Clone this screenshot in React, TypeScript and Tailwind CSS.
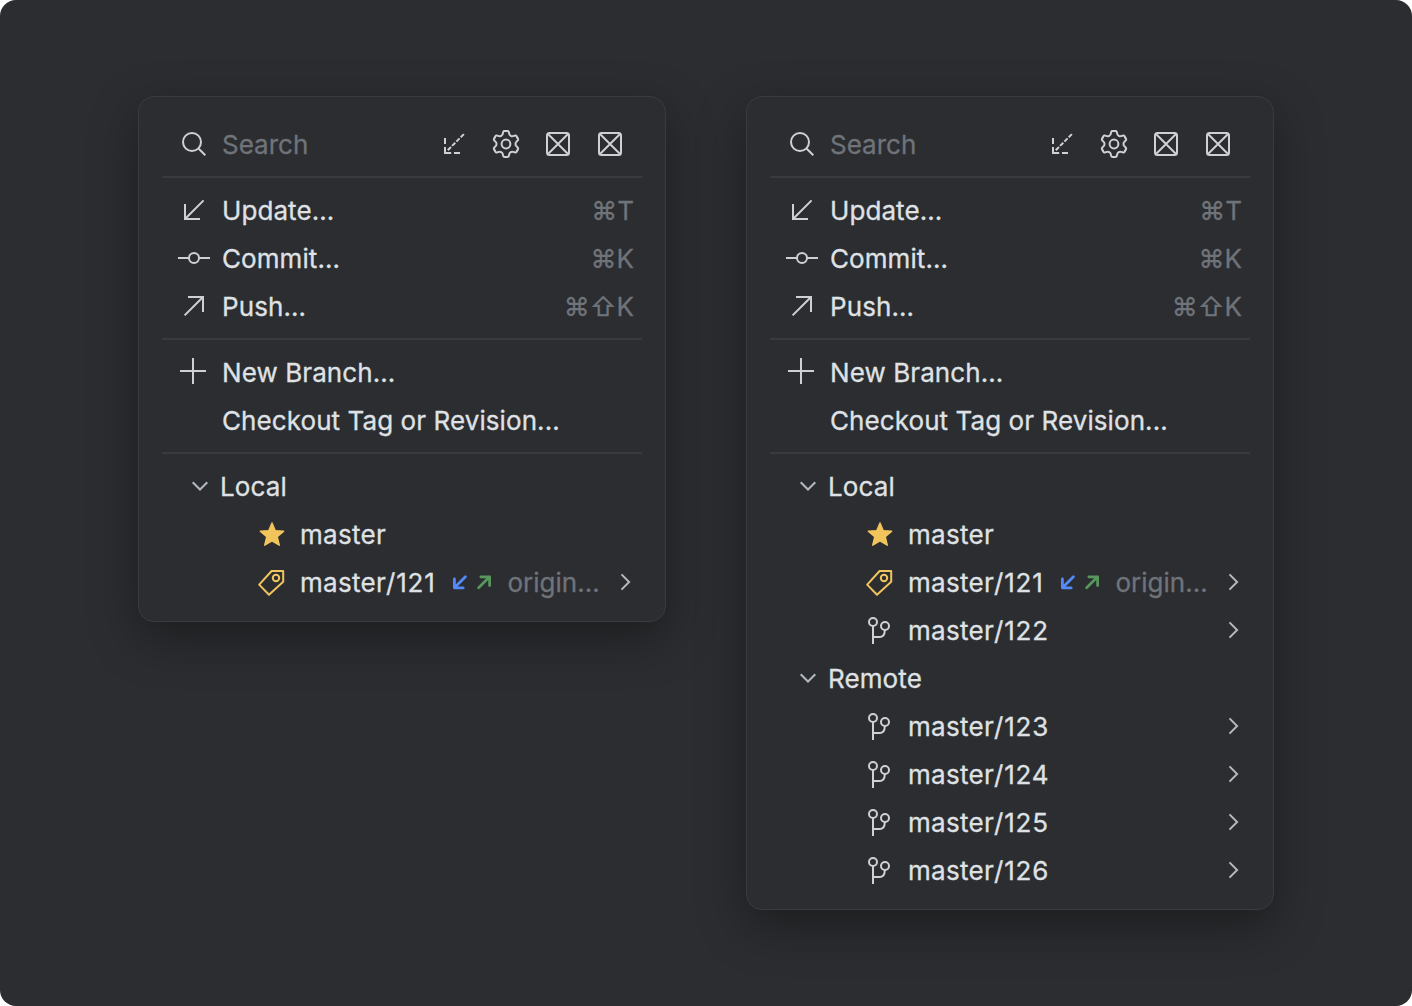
import type { ReactNode } from "react";

type IconProps = { children: ReactNode; className?: string };

function Icon({ children, className = "text-[#ced0d6]" }: IconProps) {
  return (
    <svg
      className={`size-8 shrink-0 ${className}`}
      viewBox="0 0 32 32"
      fill="none"
      stroke="currentColor"
      strokeWidth="2"
    >
      {children}
    </svg>
  );
}

const SearchIcon = () => (
  <Icon>
    <circle cx="14" cy="14" r="9" />
    <path d="M20.5 20.5L27.3 27.3" />
  </Icon>
);

const FetchIcon = () => (
  <Icon>
    <path d="M7 10V16M7 19V25H13.2M16 25H22" />
    <path d="M25.9 6.1L9.3 22.7" strokeDasharray="4.5 1.6" />
  </Icon>
);

// One sixth of the gear outline, from the middle of a tooth to the middle of the next.
const gearTooth =
  "M0 -13L1.6 -13Q2.4 -13 2.7 -12.2L3.3 -10C3.7 -8.5 5.51 -7.45 7.01 -7.86L9.22 -8.44Q10.06 -8.58 10.46 -7.89L11.26 -6.5";

const GearIcon = () => (
  <Icon>
    <g transform="translate(16 16)" strokeLinecap="round">
      {[0, 60, 120, 180, 240, 300].map((angle) => (
        <path key={angle} d={gearTooth} transform={`rotate(${angle})`} />
      ))}
      <circle r="4.4" />
    </g>
  </Icon>
);

const PlaceholderIcon = () => (
  <Icon>
    <rect x="5" y="5" width="22" height="22" rx="2.5" />
    <path d="M6 6L26 26M26 6L6 26" />
  </Icon>
);

const UpdateIcon = () => (
  <Icon>
    <path d="M7 10V25H22M7 25L25.6 6.4" />
  </Icon>
);

const CommitIcon = () => (
  <Icon>
    <circle cx="16" cy="16" r="5" />
    <path d="M0 16H11M21 16H32" />
  </Icon>
);

const PushIcon = () => (
  <Icon>
    <path d="M10 7H25V22M25 7L6.6 25.4" />
  </Icon>
);

const PlusIcon = () => (
  <Icon>
    <path d="M2 15H28M15 2V28" />
  </Icon>
);

const ChevronDown = () => (
  <Icon className="text-[#b4b8bf]">
    <path d="M8.7 12.2L16 19.5L23.3 12.2" />
  </Icon>
);

const ChevronRight = () => (
  <Icon className="text-[#b4b8bf]">
    <path d="M11.5 8.4L19.1 16L11.5 23.6" />
  </Icon>
);

const StarIcon = () => (
  <Icon className="text-[#f2c55c]">
    <path
      d="M16 5L19.2 12.6L27.7 13.3L21.3 18.8L23.3 27.2L16 22.8L8.7 27.2L10.7 18.8L4.3 13.3L12.8 12.6Z"
      fill="currentColor"
      strokeWidth="1.4"
      strokeLinejoin="round"
    />
  </Icon>
);

const TagIcon = () => (
  <Icon className="text-[#f2c55c]">
    <path d="M15.6 5H27.2V15.8L13 28.7L3.2 18.6Z" strokeLinejoin="round" />
    <circle cx="20" cy="12" r="3.2" />
  </Icon>
);

const BranchIcon = () => (
  <Icon>
    <circle cx="9" cy="8" r="4" />
    <circle cx="21" cy="12" r="4" />
    <path d="M9 12V30M20.8 16C20.8 20.5 19.5 23 15.5 23H9" />
  </Icon>
);

const IncomingIcon = () => (
  <svg className="size-6 shrink-0 text-[#548af7]" viewBox="0 0 24 24" fill="none" stroke="currentColor" strokeWidth="2.8" strokeLinecap="round" strokeLinejoin="round">
    <path d="M6.4 9V17.8H15.2M6.4 17.8L17.4 6.8" />
  </svg>
);

const OutgoingIcon = () => (
  <svg className="size-6 shrink-0 text-[#57965c]" viewBox="0 0 24 24" fill="none" stroke="currentColor" strokeWidth="2.8" strokeLinecap="round" strokeLinejoin="round">
    <path d="M8.8 6.8H17.6V15.6M17.6 6.8L6.6 17.8" />
  </svg>
);

const Separator = () => <div className="mx-[23px] my-2 h-0.5 bg-[#393b40]" />;

function Action({ icon, label, keys }: { icon?: ReactNode; label: string; keys?: string }) {
  return (
    <div className="flex h-12 items-center gap-3 pr-[31px] pl-[39px]">
      {icon ?? <span className="size-8" />}
      <span className="pt-0.5 tracking-[0.08px]">{label}</span>
      {keys && <span className="ml-auto pt-0.5 text-[#6f737a]">{keys}</span>}
    </div>
  );
}

function Group({ label }: { label: string }) {
  return (
    <div className="flex h-12 items-center gap-1 pl-[45px]">
      <ChevronDown />
      <span className="pt-0.5 tracking-[0.1px]">{label}</span>
    </div>
  );
}

type BranchProps = { icon: ReactNode; name?: string; id?: string; tracking?: string };

function Branch({ icon, name = "master", id, tracking }: BranchProps) {
  return (
    <div className="flex h-12 items-center gap-3 pr-[23px] pl-[117px]">
      {icon}
      <span className="pt-0.5 tracking-[0.3px]">
        {name}
        {id && <span className="tracking-[0.75px]">/{id}</span>}
      </span>
      {tracking && (
        <>
          <span className="flex">
            <IncomingIcon />
            <OutgoingIcon />
          </span>
          <span className="-mr-3 pt-0.5 text-[#6f737a]">{tracking}</span>
        </>
      )}
      {id && (
        <span className="ml-auto">
          <ChevronRight />
        </span>
      )}
    </div>
  );
}

function Popup({ children }: { children?: ReactNode }) {
  return (
    <section className="w-[528px] rounded-2xl border border-[#393b40] bg-[#2b2d30] pt-[23px] pb-[15px] shadow-[0_16px_48px_rgba(0,0,0,0.35)]">
      <div className="flex h-12 items-center gap-3 pr-[39px] pl-[39px]">
        <SearchIcon />
        <span className="pt-0.5 text-[#6f737a]">Search</span>
        <div className="ml-auto flex gap-5">
          <FetchIcon />
          <GearIcon />
          <PlaceholderIcon />
          <PlaceholderIcon />
        </div>
      </div>
      <Separator />
      <Action icon={<UpdateIcon />} label="Update..." keys="⌘T" />
      <Action icon={<CommitIcon />} label="Commit..." keys="⌘K" />
      <Action icon={<PushIcon />} label="Push..." keys="⌘⇧K" />
      <Separator />
      <Action icon={<PlusIcon />} label="New Branch..." />
      <Action label="Checkout Tag or Revision..." />
      <Separator />
      <Group label="Local" />
      <Branch icon={<StarIcon />} />
      <Branch icon={<TagIcon />} id="121" tracking="origin..." />
      {children}
    </section>
  );
}

const remoteIds = ["123", "124", "125", "126"];

export default function App() {
  return (
    <div className="bg-white">
      <main className="flex h-[1006px] w-[1412px] items-start gap-20 rounded-2xl bg-[#2b2d30] pt-24 pl-[138px] font-['Inter',sans-serif] text-[26px] leading-8 whitespace-nowrap text-[#dfe1e5] [-webkit-text-stroke:0.3px]">
        <Popup />
        <Popup>
          <Branch icon={<BranchIcon />} id="122" />
          <Group label="Remote" />
          {remoteIds.map((id) => (
            <Branch key={id} icon={<BranchIcon />} id={id} />
          ))}
        </Popup>
      </main>
    </div>
  );
}
